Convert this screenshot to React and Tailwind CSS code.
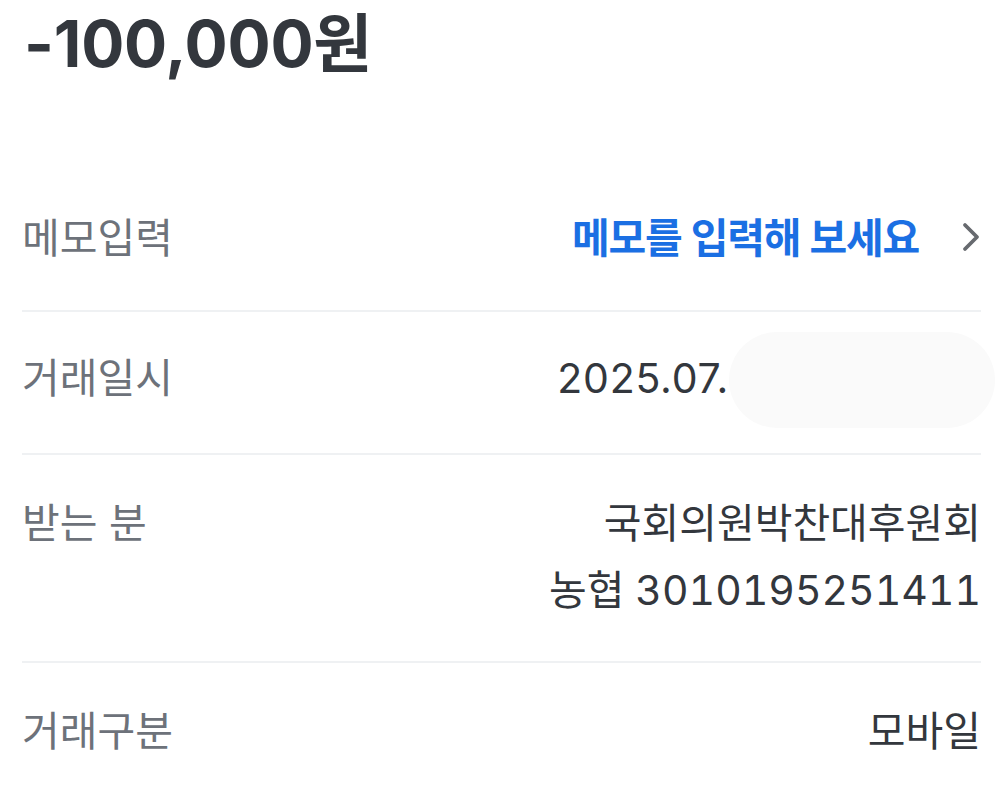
const font = { fontFamily: 'Inter, "Noto Sans CJK KR", "Noto Sans", sans-serif' };

function Divider() {
  return <div className="h-[2px] bg-[#eff1f3]" />;
}

function Row({ label, children, className = "" }) {
  return (
    <div className={`flex items-start justify-between ${className}`}>
      <span className="text-[41px] leading-[44px] text-[#6d727a]">{label}</span>
      {children}
    </div>
  );
}

function Chevron() {
  return (
    <svg width="20" height="30" viewBox="0 0 20 30" className="ml-[42px] mt-[6px]">
      <path d="M4 3 L16 15 L4 27" fill="none" stroke="#676a6f" strokeWidth="3.8" strokeLinecap="round" strokeLinejoin="round" />
    </svg>
  );
}

export default function App() {
  return (
    <div className="min-h-[803px] w-full overflow-hidden bg-white px-[22px] text-[#33373d]" style={font}>
      <h1 className="pl-[2px] pt-[4px] text-[64px] font-bold leading-[80px] tracking-[-0.2px] text-[#33373d]">
        -100,000원
      </h1>

      <div className="mt-[132px]">
        <Row label="메모입력" className="pb-[50px]">
          <div className="flex items-start">
            <span className="text-[41px] font-semibold leading-[44px] tracking-[-1.2px] text-[#1b6fe3]">메모를 입력해 보세요</span>
            <Chevron />
          </div>
        </Row>
        <Divider />

        <Row label="거래일시" className="pt-[44px] pb-[53px]">
          <div className="relative flex items-start">
            <span className="text-[41px] leading-[44px] tracking-[0.8px]">2025.07.</span>
            <span className="w-[252px]" />
            <span className="absolute right-[-14px] top-[-24px] h-[96px] w-[266px] rounded-[48px] bg-[#fafafa]" />
          </div>
        </Row>
        <Divider />

        <Row label="받는 분" className="pt-[46px] pb-[49px]">
          <div className="flex flex-col items-end gap-[23px] text-[41px] tabular-nums leading-[44px]">
            <span>국회의원박찬대후원회</span>
            <span>농협 3010195251411</span>
          </div>
        </Row>
        <Divider />

        <Row label="거래구분" className="pt-[46px]">
          <span className="text-[41px] leading-[44px]">모바일</span>
        </Row>
      </div>
    </div>
  );
}
